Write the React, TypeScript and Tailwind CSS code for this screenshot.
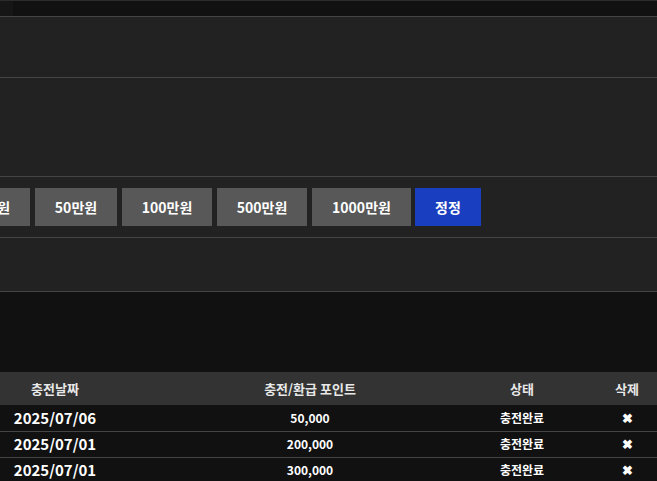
const amounts = [
  { label: '10만원', w: 'w-[82px]' },
  { label: '50만원', w: 'w-[82px]' },
  { label: '100만원', w: 'w-[90px]' },
  { label: '500만원', w: 'w-[90px]' },
  { label: '1000만원', w: 'w-[99px]' },
]

const history = [
  { date: '2025/07/06', point: '50,000', status: '충전완료' },
  { date: '2025/07/01', point: '200,000', status: '충전완료' },
  { date: '2025/07/01', point: '300,000', status: '충전완료' },
]

export default function App() {
  return (
    <div
      className="w-[657px] h-[481px] overflow-hidden bg-[#111111] text-white"
      style={{ fontFamily: '"Noto Sans CJK KR", "Noto Sans", sans-serif' }}
    >
      {/* top strip */}
      <div className="h-[17px] border-t border-[#2c2c2c] border-b border-b-[#444444] bg-[#111111] flex">
        <div className="w-[13px] bg-[#161616]" />
      </div>

      {/* form panel */}
      <div className="bg-[#222222]">
        <div className="h-[61px] border-b border-[#444444]" />
        <div className="h-[99px] border-b border-[#444444]" />
        <div className="h-[61px] border-b border-[#444444] flex items-start pt-[11px]">
          <div className="flex gap-[5px] -ml-[52px]">
            {amounts.map((a) => (
              <button
                key={a.label}
                className={`${a.w} h-[38px] bg-[#585858] text-[14px] font-bold text-white leading-none`}
              >
                {a.label}
              </button>
            ))}
            <button className="h-[38px] w-[66px] -ml-px bg-[#1a3ec0] text-[14px] font-bold text-white leading-none">
              정정
            </button>
          </div>
        </div>
        <div className="h-[54px] border-b border-[#444444]" />
      </div>

      <div className="h-[80px]" />

      {/* charge history */}
      <table className="-ml-[63px] w-[720px] table-fixed border-collapse">
        <colgroup>
          <col className="w-[236px]" />
          <col className="w-[274px]" />
          <col className="w-[150px]" />
          <col className="w-[60px]" />
        </colgroup>
        <thead>
          <tr className="h-[33px] bg-[#333333] text-[13px] font-bold text-[#e8e8e8]">
            <th>충전날짜</th>
            <th>충전/환급 포인트</th>
            <th>상태</th>
            <th>삭제</th>
          </tr>
        </thead>
        <tbody>
          {history.map((row, i) => (
            <tr key={i} className="h-[26px] border-b border-[#444444] text-center">
              <td className="text-[15px] font-semibold">{row.date}</td>
              <td className="text-[12px] font-bold">{row.point}</td>
              <td className="text-[12px] font-bold">{row.status}</td>
              <td className="text-[13px] font-bold">✖</td>
            </tr>
          ))}
        </tbody>
      </table>
    </div>
  )
}
